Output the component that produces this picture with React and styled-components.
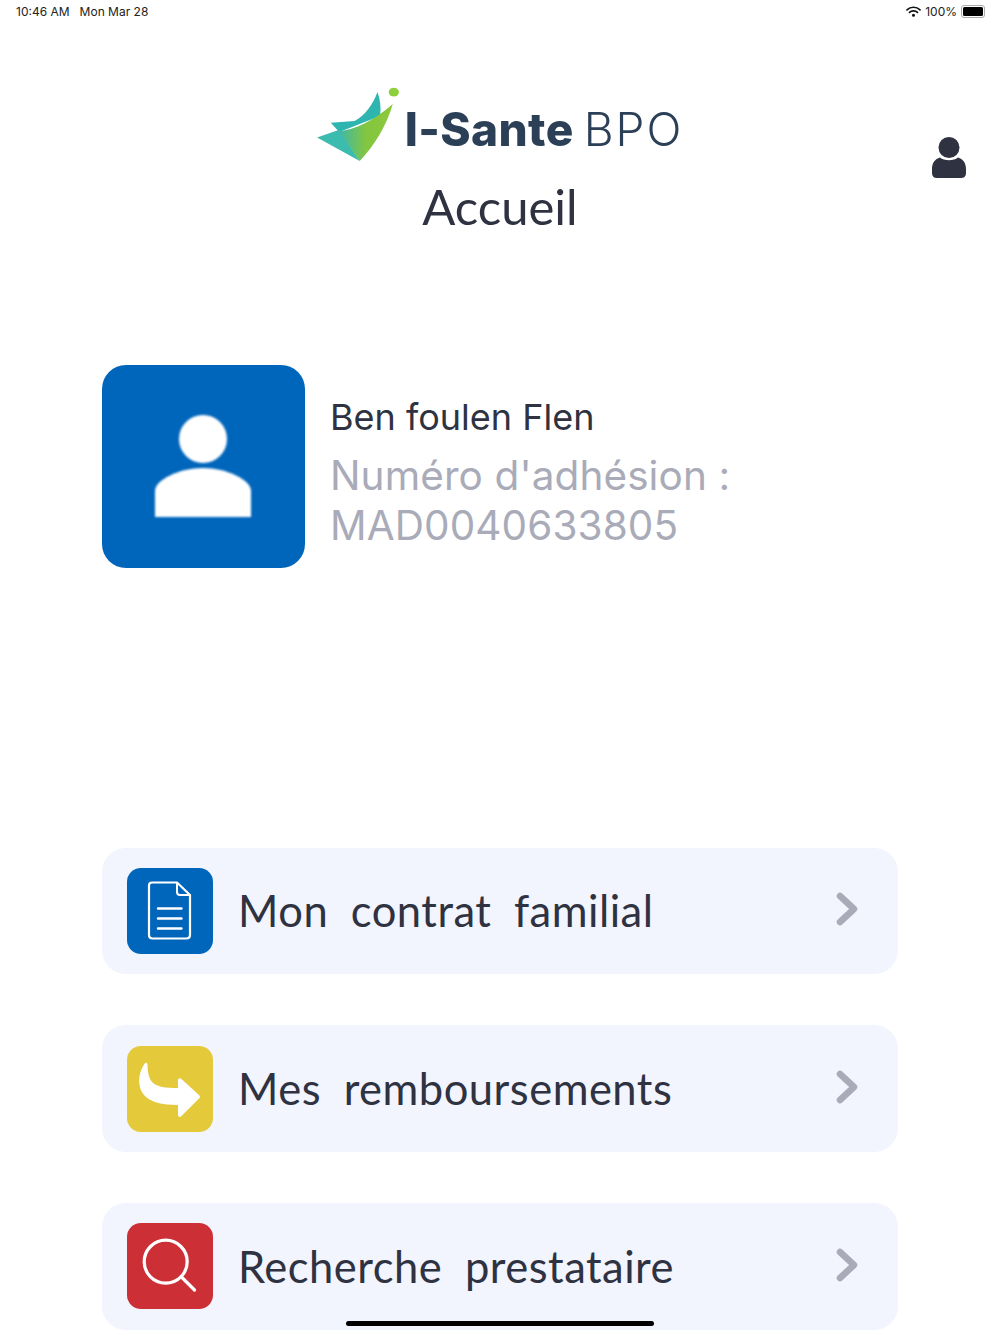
import { createGlobalStyle } from 'styled-components'
import styled from 'styled-components'

const GlobalStyle = createGlobalStyle`
  html, body {
    margin: 0;
    padding: 0;
    background: #fff;
  }
`

const menuItems = [
  { label: 'Mon contrat familial', color: '#0066bb', icon: <DocIcon /> },
  { label: 'Mes remboursements', color: '#e4c93a', icon: <ArrowIcon /> },
  { label: 'Recherche prestataire', color: '#cc3036', icon: <SearchIcon /> },
]

function DocIcon() {
  return (
    <svg width="86" height="86" viewBox="0 0 86 86" fill="none" stroke="#fff" strokeLinejoin="round" strokeLinecap="round">
      <path d="M25 14.5 H50 L63 27 V67 Q63 70.5 59.5 70.5 H25.5 Q22 70.5 22 67 V17.5 Q22 14.5 25 14.5 Z" strokeWidth="2.2" />
      <path d="M50 15 V24 Q50 27 53 27 H62.5" strokeWidth="2" />
      <path d="M31 40.5 H54.5 M31 50.5 H54.5 M31 60.5 H54.5" strokeWidth="2.4" />
    </svg>
  )
}

function ArrowIcon() {
  return (
    <svg width="86" height="86" viewBox="0 0 86 86" fill="#fff">
      <path d="M17.5 18 C11 27 10 41 17 49 C23 56 35 59 51 59 V69.5 Q52 72 54.5 70 L72.5 52 Q73.5 51 72.5 49.5 L54.5 33 Q51.5 31 51 34 V42 C38 42 30 41 25 36 C21.5 31.5 20.5 25 20.5 18 Q19 15 17.5 18 Z" />
    </svg>
  )
}

function SearchIcon() {
  return (
    <svg width="86" height="86" viewBox="0 0 86 86" fill="none" stroke="#fff" strokeWidth="3.2" strokeLinecap="round">
      <circle cx="38.7" cy="38.7" r="21.5" />
      <path d="M54.5 54 L67.5 67" />
    </svg>
  )
}

function Chevron() {
  return (
    <ChevronSvg width="22" height="34" viewBox="0 0 22 34" fill="none" stroke="#a9abb8" strokeWidth="6.5" strokeLinecap="round" strokeLinejoin="round">
      <path d="M4 4 L18 17 L4 30" />
    </ChevronSvg>
  )
}

function Wifi() {
  return (
    <svg width="15" height="11" viewBox="0 0 15 11" fill="none" stroke="#111" strokeWidth="1.7" strokeLinecap="round">
      <path d="M1 3.8 C4.5 0.4 10.5 0.4 14 3.8" />
      <path d="M3.5 6.3 C5.5 4.3 9.5 4.3 11.5 6.3" />
      <circle cx="7.5" cy="9.3" r="0.7" fill="#111" />
    </svg>
  )
}

function LogoMark() {
  return (
    <svg width="82" height="74" viewBox="0 0 240 217">
      <defs>
        <linearGradient id="wing" x1="0" y1="0" x2="1" y2="0">
          <stop offset="0" stopColor="#3fb8a8" />
          <stop offset="0.5" stopColor="#83c63f" />
          <stop offset="1" stopColor="#8cc83c" />
        </linearGradient>
      </defs>
      <path d="M177 15 C165 50 140 85 110 100 L40 105 L65 132 L185 85 C188 60 185 35 177 15 Z" fill="#2fb5b0" />
      <path d="M0 148 L65 125 L125 217 Z" fill="#3cbcae" />
      <path d="M222 50 C205 110 170 170 125 217 L65 130 C110 125 165 100 222 50 Z" fill="url(#wing)" />
      <ellipse cx="225" cy="15" rx="15" ry="13" fill="#8cd03a" />
    </svg>
  )
}

function App() {
  return (
    <Page>
      <GlobalStyle />
      <StatusBar>
        <StatusLeft>
          <span>10:46 AM</span>
          <span>Mon Mar 28</span>
        </StatusLeft>
        <StatusRight>
          <Wifi />
          <span>100%</span>
          <Battery>
            <BatteryFill />
          </Battery>
        </StatusRight>
      </StatusBar>

      <Header>
        <HeaderCenter>
          <Logo>
            <LogoMark />
            <LogoText>
              <strong>I-Sante</strong>
              <span>BPO</span>
            </LogoText>
          </Logo>
          <Title>Accueil</Title>
        </HeaderCenter>
        <UserButton>
          <svg width="34" height="41" viewBox="0 0 34 41" fill="#2e3241">
            <circle cx="17" cy="10.5" r="10.5" />
            <path d="M8 20.5 C12 24 22 24 26 20.5 C31 22 34 26 34 32 V36 Q34 41 29 41 H5 Q0 41 0 36 V32 C0 26 3 22 8 20.5 Z" />
          </svg>
        </UserButton>
      </Header>

      <Profile>
        <Avatar>
          <svg width="96" height="104" viewBox="0 0 96 104" fill="#fff">
            <circle cx="48" cy="24" r="24" />
            <path d="M0 76 C0 65 24 53 48 53 C72 53 96 65 96 76 V102 H0 Z" />
          </svg>
        </Avatar>
        <ProfileText>
          <Name>Ben foulen Flen</Name>
          <Member>
            Numéro d'adhésion :<br />
            MAD0040633805
          </Member>
        </ProfileText>
      </Profile>

      <Menu>
        {menuItems.map((item) => (
          <MenuCard key={item.label}>
            <IconBox $color={item.color}>{item.icon}</IconBox>
            <MenuLabel>{item.label}</MenuLabel>
            <Chevron />
          </MenuCard>
        ))}
      </Menu>

      <HomeBar />
    </Page>
  )
}

export default App

const Page = styled.div`
  position: relative;
  width: 1000px;
  height: 1334px;
  overflow: hidden;
  background: #fff;
`

const StatusBar = styled.div`
  display: flex;
  justify-content: space-between;
  align-items: center;
  box-sizing: border-box;
  height: 24px;
  padding: 0 15px 2px 16px;
  font-family: Inter, sans-serif;
  font-size: 12px;
  color: #222;
`

const StatusLeft = styled.div`
  display: flex;
  gap: 10px;
`

const StatusRight = styled.div`
  display: flex;
  align-items: center;
  gap: 4px;
`

const Battery = styled.div`
  width: 20px;
  height: 9px;
  padding: 1px;
  border: 1px solid #aaa;
  border-radius: 3px;
`

const BatteryFill = styled.div`
  height: 100%;
  background: #000;
  border-radius: 1.5px;
`

const Header = styled.header`
  display: grid;
  grid-template-columns: 1fr auto 1fr;
  height: 341px;
  padding-top: 62px;
  box-sizing: border-box;
`

const HeaderCenter = styled.div`
  grid-column: 2;
  display: flex;
  flex-direction: column;
  align-items: center;
`

const Logo = styled.div`
  display: flex;
  align-items: center;
  gap: 6px;
  height: 76px;
  filter: blur(0.5px);
`

const LogoText = styled.div`
  display: flex;
  align-items: baseline;
  gap: 10px;
  padding-top: 10px;
  color: #2b3f57;
  font-family: Inter, sans-serif;
  font-size: 46px;
  line-height: 1;
  strong {
    font-weight: 800;
    letter-spacing: 0.4px;
  }
  span {
    font-weight: 300;
    letter-spacing: 2px;
  }
`

const Title = styled.h1`
  margin: 14px 0 0;
  font-family: Lato, sans-serif;
  font-weight: 400;
  font-size: 49px;
  line-height: 60px;
  color: #2e3241;
`

const UserButton = styled.div`
  grid-column: 3;
  justify-self: end;
  margin: 51px 34px 0 0;
`

const Profile = styled.section`
  display: flex;
  align-items: center;
  gap: 26px;
  padding-left: 102px;
`

const Avatar = styled.div`
  display: flex;
  align-items: center;
  justify-content: center;
  box-sizing: border-box;
  width: 203px;
  height: 203px;
  padding-right: 1px;
  border-radius: 24px;
  background: #0066bb;
  svg {
    filter: blur(0.8px);
  }
`

const ProfileText = styled.div`
  margin-left: -1px;
  padding-top: 11px;
  font-family: Inter, sans-serif;
`

const Name = styled.div`
  font-size: 36px;
  line-height: 46px;
  color: #2e3241;
`

const Member = styled.div`
  margin-top: 11px;
  font-size: 40.5px;
  letter-spacing: 0.1px;
  line-height: 50px;
  color: #a9abb8;
`

const Menu = styled.nav`
  display: flex;
  flex-direction: column;
  gap: 51px;
  margin-top: 279.5px;
  padding: 0 102px;
`

const MenuCard = styled.div`
  display: flex;
  align-items: center;
  height: 126.7px;
  padding: 0 40px 0 25px;
  border-radius: 24px;
  background: #f2f4fe;
`

const IconBox = styled.div`
  display: flex;
  flex: none;
  width: 86px;
  height: 86px;
  border-radius: 14px;
  background: ${(props) => props.$color};
`

const MenuLabel = styled.div`
  flex: 1;
  margin-left: 25px;
  padding-bottom: 1px;
  font-family: Lato, sans-serif;
  font-size: 43.5px;
  letter-spacing: 0.5px;
  word-spacing: 11px;
  color: #2e3241;
`

const ChevronSvg = styled.svg`
  margin-bottom: 3px;
`

const HomeBar = styled.div`
  position: absolute;
  left: 346px;
  bottom: 8px;
  width: 308px;
  height: 5px;
  border-radius: 3px;
  background: #000;
`
